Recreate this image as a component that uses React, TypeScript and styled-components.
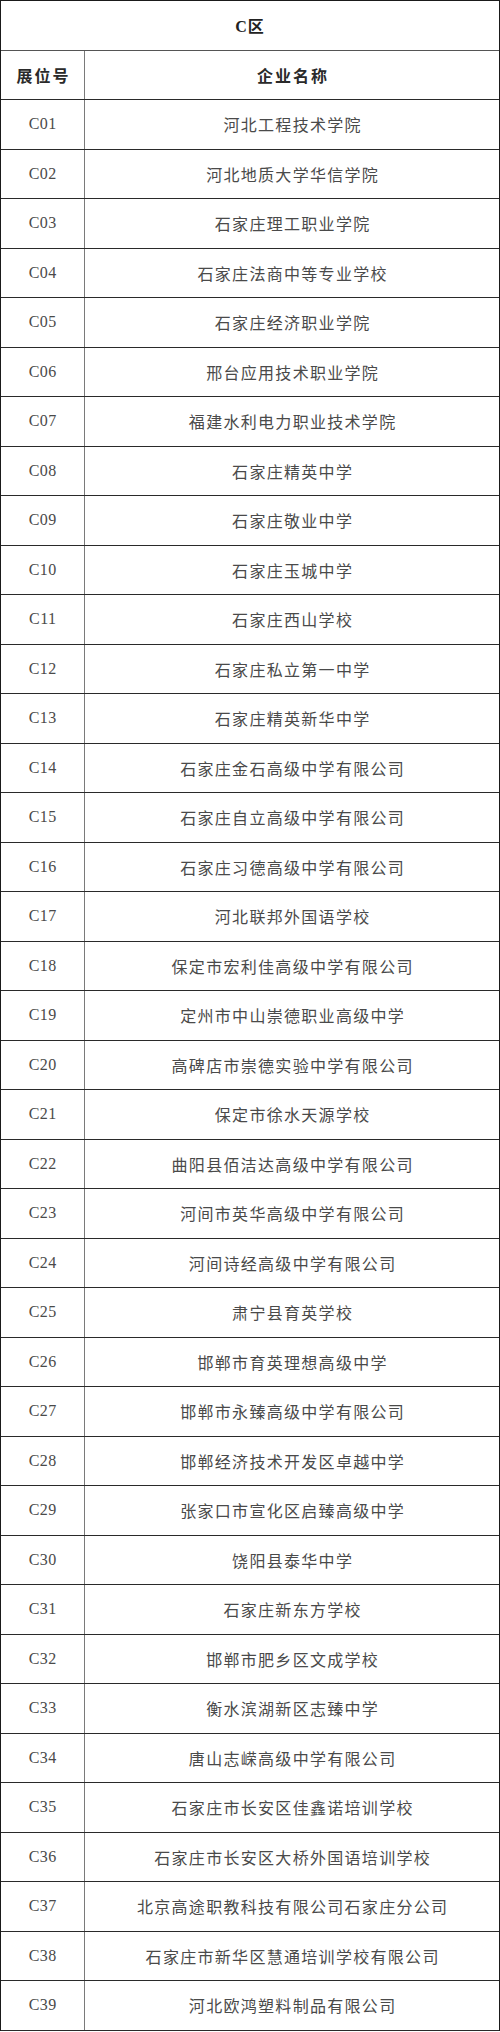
import React from "react";
import styled, { createGlobalStyle } from "styled-components";

const GlobalStyle = createGlobalStyle`
  html, body {
    margin: 0;
    padding: 0;
    background: #ffffff;
  }
  body {
    font-family: "Noto Sans CJK SC", "Noto Sans", sans-serif;
  }
`;

const rows: [string, string][] = [
  ["C01", "河北工程技术学院"],
  ["C02", "河北地质大学华信学院"],
  ["C03", "石家庄理工职业学院"],
  ["C04", "石家庄法商中等专业学校"],
  ["C05", "石家庄经济职业学院"],
  ["C06", "邢台应用技术职业学院"],
  ["C07", "福建水利电力职业技术学院"],
  ["C08", "石家庄精英中学"],
  ["C09", "石家庄敬业中学"],
  ["C10", "石家庄玉城中学"],
  ["C11", "石家庄西山学校"],
  ["C12", "石家庄私立第一中学"],
  ["C13", "石家庄精英新华中学"],
  ["C14", "石家庄金石高级中学有限公司"],
  ["C15", "石家庄自立高级中学有限公司"],
  ["C16", "石家庄习德高级中学有限公司"],
  ["C17", "河北联邦外国语学校"],
  ["C18", "保定市宏利佳高级中学有限公司"],
  ["C19", "定州市中山崇德职业高级中学"],
  ["C20", "高碑店市崇德实验中学有限公司"],
  ["C21", "保定市徐水天源学校"],
  ["C22", "曲阳县佰洁达高级中学有限公司"],
  ["C23", "河间市英华高级中学有限公司"],
  ["C24", "河间诗经高级中学有限公司"],
  ["C25", "肃宁县育英学校"],
  ["C26", "邯郸市育英理想高级中学"],
  ["C27", "邯郸市永臻高级中学有限公司"],
  ["C28", "邯郸经济技术开发区卓越中学"],
  ["C29", "张家口市宣化区启臻高级中学"],
  ["C30", "饶阳县泰华中学"],
  ["C31", "石家庄新东方学校"],
  ["C32", "邯郸市肥乡区文成学校"],
  ["C33", "衡水滨湖新区志臻中学"],
  ["C34", "唐山志嵘高级中学有限公司"],
  ["C35", "石家庄市长安区佳鑫诺培训学校"],
  ["C36", "石家庄市长安区大桥外国语培训学校"],
  ["C37", "北京高途职教科技有限公司石家庄分公司"],
  ["C38", "石家庄市新华区慧通培训学校有限公司"],
  ["C39", "河北欧鸿塑料制品有限公司"],
];

const Table = styled.div`
  box-sizing: border-box;
  width: 500px;
  border-top: 1px solid #1a1a1a;
  border-left: 1px solid #1a1a1a;
  border-right: 1px solid #1a1a1a;
  display: flex;
  flex-direction: column;
`;

const TitleRow = styled.div`
  box-sizing: border-box;
  height: 49.5px;
  border-bottom: 1px solid #555;
  display: flex;
  align-items: center;
  justify-content: center;
  font-family: "Liberation Serif", "Noto Sans CJK SC", serif;
  font-weight: 700;
  font-size: 16px;
  color: #222;
  letter-spacing: 1px;
`;

const Row = styled.div`
  box-sizing: border-box;
  height: 49.5px;
  border-bottom: 1px solid #2a2a2a;
  display: grid;
  grid-template-columns: 84px 1fr;
`;

const Cell = styled.div<{ $head?: boolean; $code?: boolean; $first?: boolean }>`
  box-sizing: border-box;
  display: flex;
  align-items: center;
  justify-content: center;
  border-right: ${(p) => (p.$first ? "1px solid #7a7a7a" : "none")};
  font-family: ${(p) =>
    p.$code
      ? `"Liberation Serif", "Noto Sans CJK SC", serif`
      : `"Noto Sans CJK SC", sans-serif`};
  font-size: 16px;
  font-weight: ${(p) => (p.$head ? 700 : 400)};
  color: ${(p) => (p.$head ? "#2a2a2a" : "#4a4a4a")};
  letter-spacing: ${(p) => (p.$head ? "2px" : p.$code ? "0.5px" : "1.3px")};
  padding-left: ${(p) => (p.$head ? "2px" : p.$code ? "0.5px" : "1.3px")};
  white-space: nowrap;
`;

export default function App() {
  return (
    <>
      <GlobalStyle />
      <Table>
        <TitleRow>C区</TitleRow>
        <Row>
          <Cell $head $first>
            展位号
          </Cell>
          <Cell $head>企业名称</Cell>
        </Row>
        {rows.map(([code, name]) => (
          <Row key={code}>
            <Cell $code $first>
              {code}
            </Cell>
            <Cell>{name}</Cell>
          </Row>
        ))}
      </Table>
    </>
  );
}
